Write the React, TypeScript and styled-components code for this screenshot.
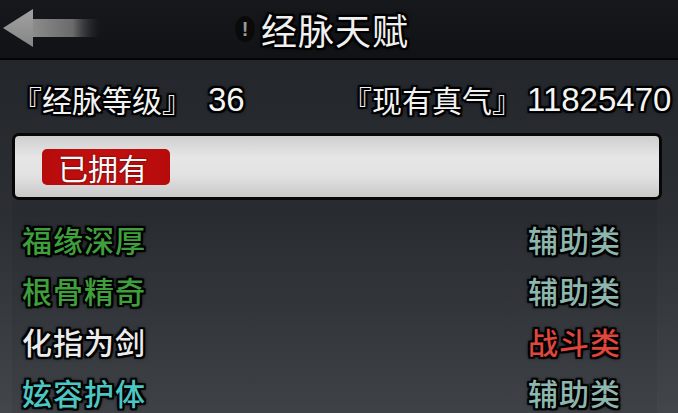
import styled, { createGlobalStyle } from "styled-components";

const GlobalStyle = createGlobalStyle`
  html, body {
    margin: 0;
    padding: 0;
    background: #141519;
  }
`;

const Screen = styled.div`
  width: 678px;
  height: 413px;
  overflow: hidden;
  display: flex;
  flex-direction: column;
  font-family: "Noto Sans CJK SC", "Noto Sans", sans-serif;
  color: #ececec;
`;

const outline = `
  text-shadow: 1px 1px 0 #000, -1px -1px 0 #000, 1px -1px 0 #000,
    -1px 1px 0 #000, 0 2px 0 #000, 0 -2px 0 #000, 2px 0 0 #000,
    -2px 0 0 #000, 2px 2px 1px #000, -2px 2px 1px #000, 2px -2px 1px #000,
    -2px -2px 1px #000, 0 0 5px #000;
`;

const Header = styled.div`
  height: 58px;
  flex-shrink: 0;
  background: linear-gradient(#17181c, #111215);
  border-bottom: 2px solid #050506;
  display: grid;
  grid-template-columns: 235px auto;
  align-items: center;
`;

const BackButton = styled.div`
  padding-left: 3px;
  display: flex;
  align-items: center;
`;

const TitleGroup = styled.div`
  display: flex;
  align-items: center;
  margin-top: -1px;
`;

const Bang = styled.span`
  width: 20px;
  height: 26px;
  border-radius: 50%;
  background: #0a0a0b;
  color: #9a9a9a;
  font-family: "Liberation Sans", sans-serif;
  font-weight: bold;
  font-size: 20px;
  line-height: 26px;
  text-align: center;
  margin-right: 6px;
`;

const Title = styled.h1`
  margin: 0;
  font-size: 36px;
  font-weight: 400;
  letter-spacing: 1px;
  line-height: 1;
  color: #f0f0f0;
  ${outline}
`;

const Body = styled.div`
  flex: 1;
  display: flex;
  flex-direction: column;
  background: linear-gradient(180deg, #23272c 0%, #2c3035 45%, #43474c 100%);
`;

const StatsRow = styled.div`
  height: 73px;
  display: flex;
  align-items: center;
  padding: 5px 0 0 12px;
  box-sizing: border-box;
`;

const Stat = styled.div<{ $width?: number }>`
  display: flex;
  align-items: center;
  width: ${(p) => (p.$width ? `${p.$width}px` : "auto")};
`;

const StatLabel = styled.span`
  font-size: 30px;
  line-height: 1;
  color: #f2f2f2;
  ${outline}
`;

const StatValue = styled.span<{ $gap: number }>`
  margin-left: ${(p) => p.$gap}px;
  font-family: "Liberation Sans", "Noto Sans", sans-serif;
  font-size: 33px;
  line-height: 1;
  color: #f4f4f4;
  ${outline}
`;

const OwnedBar = styled.div`
  margin: 0 16px 0 12px;
  height: 61px;
  border: 3px solid #070707;
  border-radius: 7px;
  background: linear-gradient(
    180deg,
    #cfcfcf 0%,
    #e6e6e6 35%,
    #e2e2e2 65%,
    #c9c9c9 100%
  );
  display: flex;
  align-items: center;
  padding-left: 27px;
`;

const Badge = styled.span`
  width: 128px;
  height: 36px;
  border-radius: 5px;
  background: linear-gradient(90deg, #b70b0b, #c2100f 50%, #b70b0b);
  color: #fafafa;
  font-size: 30px;
  line-height: 36px;
  padding-left: 16px;
  box-sizing: border-box;
  text-shadow: 0 0 2px #3a0000;
`;

const ListPanel = styled.div`
  flex: 1;
  margin: 0 21px 0 12px;
  padding: 13px 0 0 10px;
  background: rgba(0, 0, 0, 0.06);
  display: flex;
  flex-direction: column;
`;

const TalentRow = styled.div`
  height: 51px;
  flex-shrink: 0;
  display: flex;
  align-items: center;
  justify-content: space-between;
  padding-right: 36px;
`;

const TalentText = styled.span<{ $color: string }>`
  font-size: 30px;
  line-height: 1;
  font-weight: 500;
  letter-spacing: 1px;
  color: ${(p) => p.$color};
  ${outline}
`;

const GREEN = "#3f9f3c";
const TEAL = "#8db6ae";
const CYAN = "#4cc6c3";
const WHITE = "#ececec";
const RED = "#e0463c";

const talents = [
  { name: "福缘深厚", nameColor: GREEN, kind: "辅助类", kindColor: TEAL },
  { name: "根骨精奇", nameColor: GREEN, kind: "辅助类", kindColor: TEAL },
  { name: "化指为剑", nameColor: WHITE, kind: "战斗类", kindColor: RED },
  { name: "妶容护体", nameColor: CYAN, kind: "辅助类", kindColor: TEAL },
];

function BackArrow() {
  return (
    <svg width="100" height="40" viewBox="0 0 100 40">
      <defs>
        <linearGradient id="shaft" x1="0" y1="0" x2="1" y2="0">
          <stop offset="0" stopColor="#8d8d8d" />
          <stop offset="0.6" stopColor="#6a6a6a" />
          <stop offset="1" stopColor="#2a2a2c" stopOpacity="0" />
        </linearGradient>
        <linearGradient id="head" x1="0" y1="0" x2="0" y2="1">
          <stop offset="0" stopColor="#a2a2a2" />
          <stop offset="1" stopColor="#858585" />
        </linearGradient>
      </defs>
      <rect x="28" y="10" width="70" height="18" fill="url(#shaft)" />
      <polygon points="0,19 30,0 30,38" fill="url(#head)" />
    </svg>
  );
}

export default function App() {
  return (
    <Screen>
      <GlobalStyle />
      <Header>
        <BackButton>
          <BackArrow />
        </BackButton>
        <TitleGroup>
          <Bang>!</Bang>
          <Title>经脉天赋</Title>
        </TitleGroup>
      </Header>
      <Body>
        <StatsRow>
          <Stat $width={330}>
            <StatLabel>『经脉等级』</StatLabel>
            <StatValue $gap={16}>36</StatValue>
          </Stat>
          <Stat>
            <StatLabel>『现有真气』</StatLabel>
            <StatValue $gap={5}>11825470</StatValue>
          </Stat>
        </StatsRow>
        <OwnedBar>
          <Badge>已拥有</Badge>
        </OwnedBar>
        <ListPanel>
          {talents.map((t) => (
            <TalentRow key={t.name}>
              <TalentText $color={t.nameColor}>{t.name}</TalentText>
              <TalentText $color={t.kindColor}>{t.kind}</TalentText>
            </TalentRow>
          ))}
        </ListPanel>
      </Body>
    </Screen>
  );
}
